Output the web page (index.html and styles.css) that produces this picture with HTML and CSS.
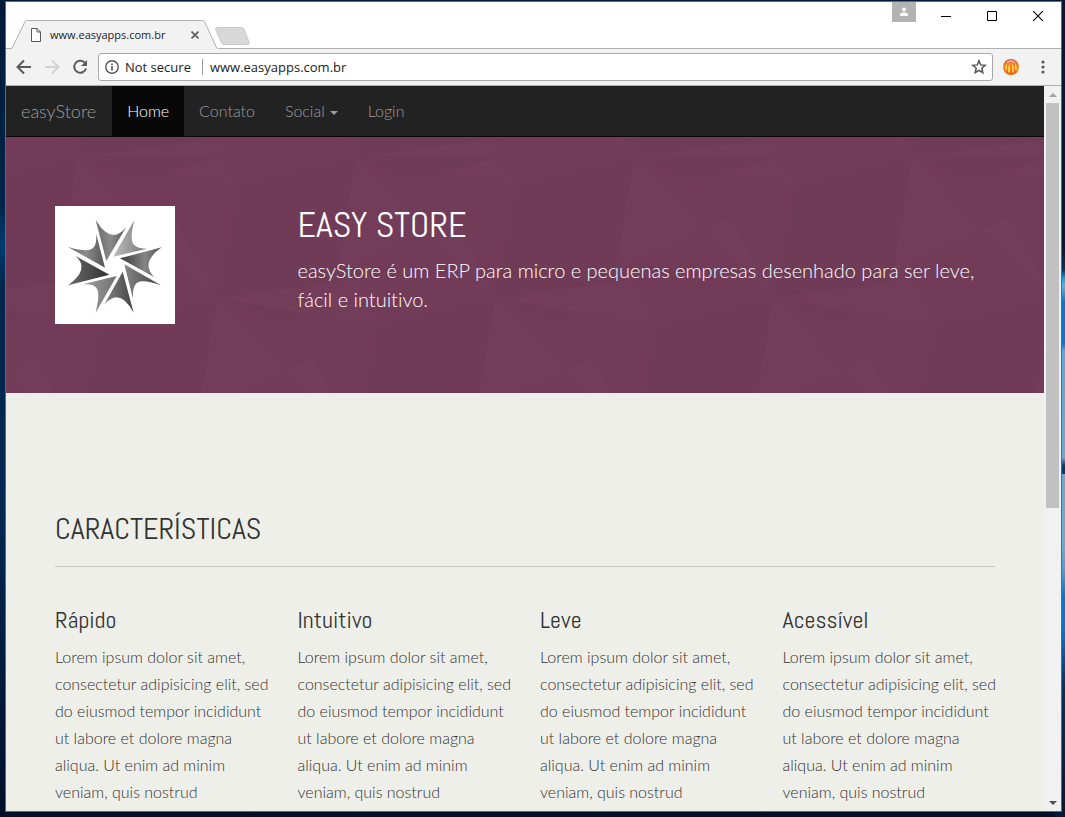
FILE: index.html
```html
<!DOCTYPE html>
<html lang="pt-BR">
<head>
<meta charset="utf-8">
<title>easyStore</title>
<link rel="stylesheet" href="styles.css">
</head>
<body>
<div class="window">
  <header class="tabstrip">
    <div class="tab">
      <svg class="tab-shape" viewBox="0 0 213 29" aria-hidden="true"><path d="M0 28.500H6L19 1.500Q19.500 .5 21 .5H196Q198 .5 198.500 1.500L211 28.500H213V29H0Z" fill="#f2f2f2"/><path d="M0 28.500H6L19 1.500Q19.500 .5 21 .5H196Q198 .5 198.500 1.500L211 28.500" fill="none" stroke="#b0b0b0"/></svg>
      <svg class="page-icon" viewBox="0 0 10 14" aria-hidden="true"><path d="M.5.5h5.500l3.500 3.500v9.500h-9zM6 .5V4h3.500" fill="#fff" stroke="#5a5a5a"/></svg>
      <span class="tab-title">www.easyapps.com.br</span>
      <button class="tab-close" aria-label="Close tab"><svg viewBox="0 0 8 8"><path d="M.5.5l7 7M7.500.5l-7 7" stroke="#5a5a5a" stroke-width="1.600"/></svg></button>
    </div>
    <button class="new-tab" aria-label="New tab"><svg viewBox="0 0 35 18"><path d="M2 .5H26Q28 .5 29 2L34 15Q35 17.500 32.500 17.500H9Q7.500 17.500 6.500 16L.8 3Q0 .5 2 .5Z" fill="#d8d8d8" stroke="#cacaca"/></svg></button>
    <div class="window-buttons">
      <button class="profile" aria-label="Profile"><svg viewBox="0 0 24 20"><circle cx="12" cy="7.500" r="2" fill="#fff"/><path d="M8 14v-1.500q0-2 4-2t4 2V14z" fill="#fff"/></svg></button>
      <button class="win-button" aria-label="Minimize"><svg viewBox="0 0 10 10"><path d="M0 5.500h10" stroke="#000"/></svg></button>
      <button class="win-button" aria-label="Maximize"><svg viewBox="0 0 10 10"><path d="M.5.5h9v9h-9z" fill="none" stroke="#000"/></svg></button>
      <button class="win-button" aria-label="Close"><svg viewBox="0 0 10 10"><path d="M0 0l10 10M10 0L0 10" stroke="#000" stroke-width="1.100"/></svg></button>
    </div>
  </header>
  <div class="toolbar">
    <button class="tool" aria-label="Back"><svg viewBox="0 0 16 16"><path d="M15 8H2M8 1.500L1.500 8 8 14.500" fill="none" stroke="#5a5a5a" stroke-width="2"/></svg></button>
    <button class="tool" aria-label="Forward"><svg viewBox="0 0 16 16"><path d="M1 8h13M8 1.500L14.500 8 8 14.500" fill="none" stroke="#d3d3d3" stroke-width="2"/></svg></button>
    <button class="tool" aria-label="Reload"><svg viewBox="0 0 16 16"><path d="M12.500 3.500A6 6 0 1 0 14 9.500" fill="none" stroke="#5a5a5a" stroke-width="2"/><path d="M15 1v6H9z" fill="#5a5a5a"/></svg></button>
    <form class="address">
      <svg class="info" viewBox="0 0 14 14" aria-hidden="true"><circle cx="7" cy="7" r="6.200" fill="none" stroke="#555" stroke-width="1.400"/><path d="M7 6v4.500M7 3.500v1.500" stroke="#555" stroke-width="1.600"/></svg>
      <label class="secure" for="url">Not secure</label>
      <input class="url" id="url" type="text" value="www.easyapps.com.br">
      <button class="star" type="button" aria-label="Bookmark"><svg viewBox="0 0 16 16"><path d="M8 1.800l1.700 4.100 4.500.4-3.400 2.900 1 4.400L8 11.300l-3.800 2.300 1-4.400L1.800 6.300l4.500-.4z" fill="none" stroke="#555" stroke-width="1.500"/></svg></button>
    </form>
    <button class="tool" aria-label="Extension"><svg viewBox="0 0 16 16"><defs><linearGradient id="ball" x2="0" y2="1"><stop offset="0" stop-color="#dd4a36"/><stop offset=".5" stop-color="#f98a20"/><stop offset="1" stop-color="#ee5a10"/></linearGradient></defs><circle cx="8" cy="8" r="8" fill="url(#ball)"/><path d="M4.500 3Q2 6 2.200 11 3 12 4 10 3.500 6 4.500 3ZM6.800 2.500Q4.600 8 5 13q1 1.500 2 0Q7 7 6.800 2.500ZM9.200 2.500Q11.400 8 11 13q-1 1.500-2 0Q9 7 9.200 2.500ZM11.500 3Q14 6 13.800 11 13 12 12 10 12.500 6 11.500 3Z" fill="#ffd34a"/><path d="M3.500 3.200Q8-1 12.500 3.200L11.500 4Q8 2 4.500 4Z" fill="#fff" opacity=".5"/></svg></button>
    <button class="tool menu" aria-label="Menu"><svg viewBox="0 0 16 16"><g fill="#5a5a5a"><circle cx="8" cy="3" r="1.600"/><circle cx="8" cy="8" r="1.600"/><circle cx="8" cy="13" r="1.600"/></g></svg></button>
  </div>
  <div class="viewport">
    <main class="page">
      <nav class="navbar">
        <a class="brand" href="#">easyStore</a>
        <a class="nav-link active" href="#">Home</a>
        <a class="nav-link" href="#">Contato</a>
        <a class="nav-link" href="#">Social<span class="caret"></span></a>
        <a class="nav-link" href="#">Login</a>
      </nav>
      <section class="hero">
        <svg class="facets" aria-hidden="true">
          <defs>
            <g id="facet">
              <path d="M-116 27L0 0-18 113-139 141Z" fill="#703a56"/>
              <path d="M-116 27L0 142-80 166-139 141Z" fill="#6c3953"/>
              <path d="M0 0L70 73-18 113Z" fill="#743d5b"/>
              <path d="M70 73L139 141 96 60Z" fill="#753f5d"/>
              <path d="M0 142L70 73 139 141 23 168Z" fill="#713b58"/>
              <path d="M0 0L139-18 162 27Z" fill="#743e5c"/>
            </g>
            <pattern id="facets" width="278" height="282" x="72" y="20" patternUnits="userSpaceOnUse">
              <g opacity=".5">
                <use href="#facet"/><use href="#facet" x="278"/>
                <use href="#facet" x="139" y="141"/><use href="#facet" x="417" y="141"/><use href="#facet" x="-139" y="141"/>
                <use href="#facet" y="282"/><use href="#facet" x="278" y="282"/>
                <use href="#facet" x="139" y="-141"/><use href="#facet" x="-139" y="-141"/>
              </g>
            </pattern>
          </defs>
          <rect width="100%" height="100%" fill="url(#facets)"/>
        </svg>
        <div class="container hero-grid">
          <svg class="logo" viewBox="30 30 360 354" role="img" aria-label="easyStore">
            <defs>
              <linearGradient id="g1"><stop offset="0" stop-color="#6c6c6c"/><stop offset=".5" stop-color="#8a8a8a"/><stop offset="1" stop-color="#555"/></linearGradient>
              <linearGradient id="g2"><stop offset="0" stop-color="#bbb"/><stop offset="1" stop-color="#777"/></linearGradient>
              <linearGradient id="g3"><stop offset="0" stop-color="#383838"/><stop offset=".6" stop-color="#858585"/><stop offset="1" stop-color="#555"/></linearGradient>
              <linearGradient id="g4"><stop offset="0" stop-color="#696969"/><stop offset=".6" stop-color="#484848"/><stop offset="1" stop-color="#303030"/></linearGradient>
              <linearGradient id="g5"><stop offset="0" stop-color="#858585"/><stop offset="1" stop-color="#424242"/></linearGradient>
              <linearGradient id="g6"><stop offset="0" stop-color="#a0a0a0"/><stop offset="1" stop-color="#717171"/></linearGradient>
            </defs>
            <path d="M30 30h360v354H30z" fill="#fff"/>
            <path d="M152 72Q199 149 243 94L184 195Z" fill="url(#g1)"/>
            <path d="M268 72L205 182 306 158C255 158 253 135 268 72Z" fill="url(#g2)"/>
            <path d="M350 154L225 187 327 243Q285 200 350 154Z" fill="url(#g3)"/>
            <path d="M348 268L238 205 264 308C262 252 280 245 348 268Z" fill="url(#g5)"/>
            <path d="M266 350L233 227 177 327Q223 271 266 350Z" fill="url(#g5)"/>
            <path d="M152 350L215 240 113 265C165 262 167 285 152 350Z" fill="url(#g6)"/>
            <path d="M69 268L193 236 92 180Q136 219 69 268Z" fill="url(#g4)"/>
            <path d="M69 153L180 215 154 115C155 165 140 172 69 153Z" fill="url(#g1)"/>
          </svg>
          <div>
            <h1>EASY STORE</h1>
            <p class="lead">easyStore é um ERP para micro e pequenas empresas desenhado para ser leve, fácil e intuitivo.</p>
          </div>
        </div>
      </section>
      <section class="features container">
        <h2>CARACTERÍSTICAS</h2>
        <div class="feature-grid">
          <article><h3>Rápido</h3><p>Lorem ipsum dolor sit amet, consectetur adipisicing elit, sed do eiusmod tempor incididunt ut labore et dolore magna aliqua. Ut enim ad minim veniam, quis nostrud</p></article>
          <article><h3>Intuitivo</h3><p>Lorem ipsum dolor sit amet, consectetur adipisicing elit, sed do eiusmod tempor incididunt ut labore et dolore magna aliqua. Ut enim ad minim veniam, quis nostrud</p></article>
          <article><h3>Leve</h3><p>Lorem ipsum dolor sit amet, consectetur adipisicing elit, sed do eiusmod tempor incididunt ut labore et dolore magna aliqua. Ut enim ad minim veniam, quis nostrud</p></article>
          <article><h3>Acessível</h3><p>Lorem ipsum dolor sit amet, consectetur adipisicing elit, sed do eiusmod tempor incididunt ut labore et dolore magna aliqua. Ut enim ad minim veniam, quis nostrud</p></article>
        </div>
      </section>
    </main>
    <div class="scrollbar">
      <button class="scroll-button" aria-label="Scroll up"><svg viewBox="0 0 8 4"><path d="M0 4l4-4 4 4z" fill="#a3a3a3"/></svg></button>
      <div class="track"><div class="thumb"></div></div>
      <button class="scroll-button" aria-label="Scroll down"><svg viewBox="0 0 8 4"><path d="M0 0h8L4 4z" fill="#505050"/></svg></button>
    </div>
  </div>
</div>
</body>
</html>
```
FILE: styles.css
```css
* { box-sizing: border-box; }
body {
  margin: 0;
  height: 100vh;
  padding: 1px 3px 5px 5px;
  display: flex;
  overflow: hidden;
  font-family: Lato, sans-serif;
  font-variant-ligatures: none;
  background:
    linear-gradient(#001a38 0 30%, #00335f 33%, #00a0e0 34%, #58b4dc 35%, #0078d0 37% 42%, #58a8d8 43%, #68aad2 56%, #003a70 57% 58%, #68aad2 58% 67%, #4a9cd0 70%, #0078d0 73% 77%, #00335f 84%, #001a38) right / 10px 100% no-repeat,
    linear-gradient(#001a38, #00254a 25%, #003c70 30%, #00264c 35%, #002750 65%, #000f28);
}
button { padding: 0; border: 0; background: none; display: flex; align-items: center; justify-content: center; }
svg { display: block; }

.window { flex: 1; min-width: 0; display: flex; flex-direction: column; border: 1px solid #1c7ac8; background: #fff; }

.tabstrip { flex: none; height: 47px; display: flex; align-items: flex-end; border-bottom: 1px solid #b0b0b0; }
.tab { position: relative; width: 213px; height: 29px; margin-bottom: -1px; padding-left: 25px; display: flex; align-items: center; }
.tab-shape { position: absolute; inset: 0; width: 100%; height: 100%; }
.page-icon { position: relative; width: 10px; height: 14px; }
.tab-title { position: relative; flex: 1; margin-left: 9px; font: 11px "Open Sans", sans-serif; color: #222; }
.tab-close { position: relative; margin-right: 20px; }
.tab-close svg { width: 8px; height: 8px; }
.new-tab { margin: 0 0 3px -4px; }
.new-tab svg { width: 35px; height: 18px; }
.window-buttons { margin-left: auto; align-self: flex-start; display: flex; }
.profile { width: 24px; height: 20px; background: #b3b3b3; margin-right: 7px; }
.profile svg { width: 24px; height: 20px; }
.win-button { width: 46px; height: 28px; }
.win-button svg { width: 10px; height: 10px; }

.toolbar { flex: none; height: 37px; display: flex; align-items: center; gap: 12px; padding: 0 10px; background: #f2f2f2; border-bottom: 1px solid #b0b0b0; }
.tool svg { width: 16px; height: 16px; }
.menu { margin-left: 4px; }
.address { flex: 1; min-width: 0; height: 28px; display: flex; align-items: center; margin: 0 -2px; padding: 0 5px 0 6px; border: 1px solid #a8a8a8; border-radius: 3px; background: #fff; font: 13px "Open Sans", sans-serif; color: #222; }
.info { width: 14px; height: 14px; margin-right: 6px; }
.secure { padding-right: 11px; border-right: 1px solid #999; line-height: 16px; }
.url { flex: 1; min-width: 0; border: 0; padding: 0 0 0 7px; background: none; font: inherit; color: inherit; }
.star svg { width: 16px; height: 16px; }

.viewport { flex: 1; min-height: 0; display: flex; }
.page { flex: 1; min-width: 0; overflow: hidden; background: #eeefe9; color: #333; }
.container { width: 100%; max-width: 970px; margin: 0 auto; padding: 0 15px; }

.navbar { display: flex; height: 51px; background: #222; border-bottom: 1px solid #080808; }
.navbar a { padding: 15px; line-height: 20px; font-weight: 300; color: #9d9d9d; text-decoration: none; }
.navbar .brand { padding-right: 16px; font-size: 18px; }
.nav-link { font-size: 16px; display: flex; align-items: center; }
.navbar .active { background: #080808; color: #fff; }
.caret { margin-left: 5px; margin-top: 3px; border: 4px solid transparent; border-top-color: currentColor; border-bottom: 0; }

.hero { position: relative; padding: 69px 0; background: #723c59; color: #fff; }
.facets { position: absolute; inset: 0; width: 100%; height: 100%; }
.hero-grid { position: relative; display: grid; grid-template-columns: repeat(4, 1fr); column-gap: 30px; }
.hero-grid > div { grid-column: 2 / 5; }
.logo { width: 120px; height: 118px; }
h1, h2, h3 { margin: 0; font-family: Abel, "Roboto Condensed", "Liberation Sans Narrow", sans-serif; font-weight: 300; }
h1 { font-size: 36px; line-height: 38px; }
.lead { margin: 12px 0 0; font-size: 20px; font-weight: 300; line-height: 29px; }

.features { padding-top: 116px; }
h2 { font-size: 30px; line-height: 40px; padding-bottom: 17px; border-bottom: 1px solid #c8c8c8; }
.feature-grid { display: grid; grid-template-columns: repeat(4, 1fr); margin-right: -30px; padding-top: 40px; }
article { padding-right: 24px; }
h3 { font-size: 24px; line-height: 26px; }
article p { margin: 10px 0 0; font-size: 16px; font-weight: 300; line-height: 27px; }

.scrollbar { flex: none; width: 17px; display: flex; flex-direction: column; background: #f1f1f1; }
.scroll-button { height: 17px; flex: none; }
.scroll-button svg { width: 8px; height: 4px; }
.track { flex: 1; padding: 0 2px; display: grid; grid-template-rows: 17fr 12fr; }
.thumb { background: #c1c1c1; }
```
